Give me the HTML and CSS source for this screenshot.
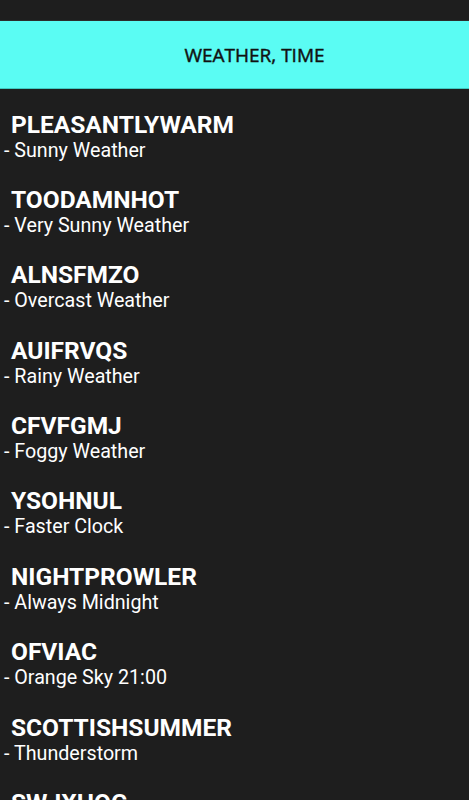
FILE: index.html
```html
<!DOCTYPE html>
<html>
<head>
<meta charset="utf-8">
<link rel="stylesheet" href="styles.css">
</head>
<body>
<div class="topbar"></div>
<header class="header"><span class="header-title">WEATHER, TIME</span></header>
<ul class="list">
  <li class="item"><div class="item-title">PLEASANTLYWARM</div><div class="item-sub">- Sunny Weather</div></li>
  <li class="item"><div class="item-title">TOODAMNHOT</div><div class="item-sub">- Very Sunny Weather</div></li>
  <li class="item"><div class="item-title">ALNSFMZO</div><div class="item-sub">- Overcast Weather</div></li>
  <li class="item"><div class="item-title">AUIFRVQS</div><div class="item-sub">- Rainy Weather</div></li>
  <li class="item"><div class="item-title">CFVFGMJ</div><div class="item-sub">- Foggy Weather</div></li>
  <li class="item"><div class="item-title">YSOHNUL</div><div class="item-sub">- Faster Clock</div></li>
  <li class="item"><div class="item-title">NIGHTPROWLER</div><div class="item-sub">- Always Midnight</div></li>
  <li class="item"><div class="item-title">OFVIAC</div><div class="item-sub">- Orange Sky 21:00</div></li>
  <li class="item"><div class="item-title">SCOTTISHSUMMER</div><div class="item-sub">- Thunderstorm</div></li>
  <li class="item"><div class="item-title">SWJXHQG</div><div class="item-sub">- Sandstorm</div></li>
</ul>
</body>
</html>
```
FILE: styles.css
```css
html, body {
  margin: 0;
  padding: 0;
  background: #1e1e1e;
  overflow: hidden;
  height: 800px;
}
body {
  font-family: Roboto, "Liberation Sans", sans-serif;
  color: #ffffff;
}
.topbar {
  height: 20px;
  border-bottom: 1px solid #2c2c2c;
}
.header {
  height: 67px;
  background: #5afcf3;
  border-bottom: 1px solid #3fc9c1;
  display: flex;
  align-items: center;
  justify-content: center;
  padding-left: 40px;
}
.header-title {
  font-family: "Open Sans", "Noto Sans", sans-serif;
  font-weight: 400;
  font-size: 19px;
  color: #111;
  -webkit-text-stroke: 0.45px #111;
}
.list {
  list-style: none;
  margin: 0;
  padding: 20.5px 0 0 0;
}
.item {
  margin-bottom: 23.4px;
}
.item-title {
  font-weight: 700;
  font-size: 24.5px;
  line-height: 29px;
  padding-left: 11px;
}
.item-sub {
  font-size: 19.7px;
  line-height: 23px;
  padding-left: 4px;
}
```
